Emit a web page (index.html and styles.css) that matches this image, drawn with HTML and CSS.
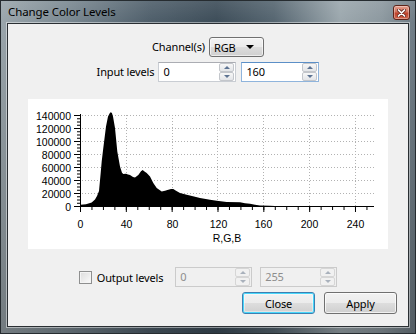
FILE: index.html
```html
<!DOCTYPE html>
<html lang="en">
<head>
  <meta charset="UTF-8">
  <title>Change Color Levels</title>
  <link rel="stylesheet" href="styles.css">
</head>
<body>
  <div class="window">
    <div class="titlebar">
      <span class="title">Change Color Levels</span>
      <button class="close-btn" aria-label="Close">
        <svg width="9" height="8" viewBox="0 0 9 8">
          <path d="M1.5 1 L7.5 7 M7.5 1 L1.5 7" stroke="#6b2c22" stroke-width="3.4" stroke-linecap="round"/>
          <path d="M1.5 1 L7.5 7 M7.5 1 L1.5 7" stroke="#fff" stroke-width="1.7" stroke-linecap="round"/>
        </svg>
      </button>
    </div>

    <div class="client">
      <div class="row channel-row">
        <span class="label">Channel(s)</span>
        <div class="combo"><span>RGB</span><span class="combo-arrow"></span></div>
      </div>

      <div class="row input-row">
        <span class="label">Input levels</span>
        <div class="spin">
          <span class="spin-value">0</span>
          <span class="spin-buttons"><span class="spin-up"></span><span class="spin-down"></span></span>
        </div>
        <div class="spin focused">
          <span class="spin-value">160</span>
          <span class="spin-buttons"><span class="spin-up"></span><span class="spin-down"></span></span>
        </div>
      </div>

      <div class="chart">
        <svg class="plot" width="360" height="150" viewBox="28 99 360 150">
          <!-- grid -->
          <g stroke="#b2b2b2" stroke-dasharray="1 2" stroke-width="1">
            <line x1="82" y1="115.5" x2="374" y2="115.5"/>
            <line x1="82" y1="128.5" x2="374" y2="128.5"/>
            <line x1="82" y1="141.5" x2="374" y2="141.5"/>
            <line x1="82" y1="154.5" x2="374" y2="154.5"/>
            <line x1="82" y1="167.5" x2="374" y2="167.5"/>
            <line x1="82" y1="180.5" x2="374" y2="180.5"/>
            <line x1="82" y1="193.5" x2="374" y2="193.5"/>
            <line x1="126.5" y1="115" x2="126.5" y2="206"/>
            <line x1="172.5" y1="115" x2="172.5" y2="206"/>
            <line x1="217.5" y1="115" x2="217.5" y2="206"/>
            <line x1="263.5" y1="115" x2="263.5" y2="206"/>
            <line x1="309.5" y1="115" x2="309.5" y2="206"/>
            <line x1="355.5" y1="115" x2="355.5" y2="206"/>
          </g>

          <!-- histogram -->
          <path fill="#000" d="M80.5 206.5 L80.5 204.8 L86 204.3 L91.7 202.5 L95 199.5 L97 196 L99 191 L100.5 175 L101.7 161.5 L103.3 148 L106 126.5 L108 116.5 L110 112.8 L111 112.3 L112 113.3 L113 116.5 L115 128 L117.3 151.5 L120 166.5 L122 172.8 L123.3 174 L126 173.8 L128 174.5 L130 175 L133 177 L135 177.5 L138.3 175 L141 171.3 L142.7 170 L144.5 171.5 L146.7 173 L150 176.5 L153.3 183 L156.7 188 L161.7 191.5 L165 190.8 L168.3 189.8 L171 189 L173.3 189 L176 190.8 L180 193 L186.7 194.8 L193 196.3 L200 198 L210 199.8 L216.7 200.8 L226.7 202 L240 202.2 L245 203.3 L250 203.8 L255 204.8 L260 205.5 L270 205.8 L285 206.5 Z"/>

          <!-- axes and ticks -->
          <g stroke="#000" fill="none">
            <line x1="80.5" y1="114" x2="80.5" y2="207"/>
            <line x1="80" y1="206.5" x2="374" y2="206.5"/>
            <line x1="78.5" y1="207" x2="78.5" y2="114" stroke-width="3" stroke-dasharray="1 2.25"/>
            <line x1="77" y1="207" x2="77" y2="114" stroke-width="6" stroke-dasharray="1 12"/>
            <line x1="80" y1="208.5" x2="372" y2="208.5" stroke-width="3" stroke-dasharray="1 10.458"/>
            <line x1="80" y1="209.5" x2="372" y2="209.5" stroke-width="5" stroke-dasharray="1 44.83"/>
          </g>

          <g class="tick-labels">
            <text x="71" y="119.5" text-anchor="end">140000</text>
            <text x="71" y="132.5" text-anchor="end">120000</text>
            <text x="71" y="145.5" text-anchor="end">100000</text>
            <text x="71" y="158.5" text-anchor="end">80000</text>
            <text x="71" y="171.5" text-anchor="end">60000</text>
            <text x="71" y="184.5" text-anchor="end">40000</text>
            <text x="71" y="197.5" text-anchor="end">20000</text>
            <text x="71" y="210.5" text-anchor="end">0</text>
            <text x="80.5" y="227.5" text-anchor="middle">0</text>
            <text x="126.5" y="227.5" text-anchor="middle">40</text>
            <text x="172.5" y="227.5" text-anchor="middle">80</text>
            <text x="218.5" y="227.5" text-anchor="middle">120</text>
            <text x="263.5" y="227.5" text-anchor="middle">160</text>
            <text x="309.5" y="227.5" text-anchor="middle">200</text>
            <text x="355.5" y="227.5" text-anchor="middle">240</text>
            <text x="227" y="241.5" text-anchor="middle">R,G,B</text>
          </g>
        </svg>
      </div>

      <div class="row output-row">
        <label class="check"><span class="checkbox"></span>Output levels</label>
        <div class="spin disabled">
          <span class="spin-value">0</span>
          <span class="spin-buttons"><span class="spin-up"></span><span class="spin-down"></span></span>
        </div>
        <div class="spin disabled">
          <span class="spin-value">255</span>
          <span class="spin-buttons"><span class="spin-up"></span><span class="spin-down"></span></span>
        </div>
      </div>

      <div class="button-row">
        <button class="btn default">Close</button>
        <button class="btn">Apply</button>
      </div>
    </div>
  </div>
</body>
</html>
```

FILE: styles.css
```css
* {
  box-sizing: border-box;
}

body {
  margin: 0;
  font-family: "Noto Sans", "Open Sans", sans-serif;
  font-size: 11px;
  letter-spacing: -0.15px;
  color: #000;
  background: #fff;
}

/* window frame */
.window {
  width: 416px;
  height: 334px;
  display: flex;
  flex-direction: column;
  padding: 0 6px 6px;
  border: 1px solid #262c30;
  background:
    linear-gradient(180deg, rgba(255, 255, 255, 0.1) 0, rgba(255, 255, 255, 0) 22px, rgba(0, 0, 0, 0.25) 100%),
    linear-gradient(90deg, #9aa5ab 0%, #7a8891 16%, #4e5e6a 36%, #3c4c58 52%, #556570 66%, #9ba7ad 82%, #8c989f 92%, #6e7b84 100%);
}

.titlebar {
  height: 22px;
  flex: none;
  display: flex;
  align-items: flex-start;
  justify-content: space-between;
  margin-right: -1px;
}

.title {
  margin-top: 3px;
  padding-left: 1px;
  font-size: 11.5px;
  line-height: 16px;
  letter-spacing: -0.1px;
  color: #000;
}

.close-btn {
  width: 17px;
  height: 15px;
  margin-top: 4px;
  padding: 0;
  display: flex;
  align-items: center;
  justify-content: center;
  border: 1px solid #5e2419;
  border-radius: 3px;
  background: linear-gradient(180deg, #e6a08f 0%, #d2715c 45%, #c0432c 55%, #d0654c 100%);
  box-shadow: inset 0 0 0 1px rgba(255, 255, 255, 0.35);
}

/* dialog body */
.client {
  flex: 1;
  display: flex;
  flex-direction: column;
  background: #f0f0f0;
  border: 1px solid #2a2f33;
  box-shadow: 0 0 0 1px rgba(255, 255, 255, 0.45);
}

.row {
  display: flex;
  align-items: center;
  justify-content: center;
}

.channel-row {
  margin-top: 13px;
  gap: 4px;
}

.input-row {
  margin-top: 5px;
  gap: 4px;
}

.input-row .spin + .spin {
  margin-left: 1px;
}

.label {
  line-height: 16px;
}

.combo {
  width: 55px;
  height: 20px;
  display: flex;
  align-items: center;
  justify-content: space-between;
  padding: 0 9px 0 4px;
  border: 1px solid #707070;
  border-radius: 3px;
  background: linear-gradient(180deg, #f3f3f3 0%, #ebebeb 50%, #dddddd 51%, #cfcfcf 100%);
  box-shadow: inset 0 0 0 1px rgba(255, 255, 255, 0.6);
}

.combo-arrow {
  width: 0;
  height: 0;
  border-left: 4px solid transparent;
  border-right: 4px solid transparent;
  border-top: 4px solid #000;
}

/* spin boxes */
.spin {
  width: 78px;
  height: 20px;
  display: flex;
  align-items: stretch;
  justify-content: space-between;
  background: #fff;
  border: 1px solid #c9cdd3;
  border-top-color: #abadb3;
}

.spin.focused {
  border-color: #8fb4dc;
  border-top-color: #5b8fc7;
}

.spin-value {
  padding-left: 4px;
  line-height: 18px;
}

.spin-buttons {
  width: 15px;
  display: flex;
  flex-direction: column;
  margin: 0 1px 0 0;
}

.spin-up,
.spin-down {
  flex: 1;
  display: flex;
  align-items: center;
  justify-content: center;
  border: 1px solid #c3c6cb;
  border-radius: 2px;
  background: linear-gradient(180deg, #f7f7f7, #e3e5e8);
}

.spin-up::after,
.spin-down::after {
  content: "";
  width: 0;
  height: 0;
  border-left: 3px solid transparent;
  border-right: 3px solid transparent;
}

.spin-up::after {
  border-bottom: 3px solid #5d7392;
}

.spin-down::after {
  border-top: 3px solid #5d7392;
}

.spin.disabled {
  width: 77px;
  background: #f0f0f0;
  border-color: #cbcbcb;
  color: #8d8d8d;
}

.spin.disabled .spin-up,
.spin.disabled .spin-down {
  border-color: #d6d6d6;
  background: #f1f1f1;
}

.spin.disabled .spin-up::after {
  border-bottom-color: #a9b1bc;
}

.spin.disabled .spin-down::after {
  border-top-color: #a9b1bc;
}

/* plot */
.chart {
  margin: 17px 20px 0;
  height: 150px;
  background: #fff;
}

.plot {
  display: block;
}

.tick-labels text {
  font-family: "Liberation Sans", sans-serif;
  font-size: 10.5px;
  letter-spacing: 0;
  fill: #000;
}

/* output row */
.output-row {
  margin-top: 18px;
}

.check {
  display: flex;
  align-items: center;
  gap: 5px;
  margin-right: 12px;
}

.checkbox {
  width: 13px;
  height: 13px;
  border: 1px solid #8e8f8f;
  background: linear-gradient(135deg, #dcdcdc, #fbfbfb);
  box-shadow: inset 0 0 0 1px #f4f4f4;
}

.output-row .spin + .spin {
  margin-left: 8px;
}

/* buttons */
.button-row {
  margin-top: 5px;
  display: flex;
  justify-content: flex-end;
  gap: 9px;
  padding-right: 11px;
}

.btn {
  width: 73px;
  height: 22px;
  padding: 0;
  font-family: inherit;
  font-size: 11px;
  letter-spacing: -0.15px;
  color: #000;
  border: 1px solid #707070;
  border-radius: 3px;
  background: linear-gradient(180deg, #f2f2f2 0%, #ebebeb 50%, #dddddd 51%, #cfcfcf 100%);
  box-shadow: inset 0 0 0 1px rgba(255, 255, 255, 0.7);
}

.btn.default {
  border-color: #3c7fb1;
  box-shadow: inset 0 0 0 1px #48d7fb, inset 0 0 0 2px rgba(255, 255, 255, 0.4);
}
```
